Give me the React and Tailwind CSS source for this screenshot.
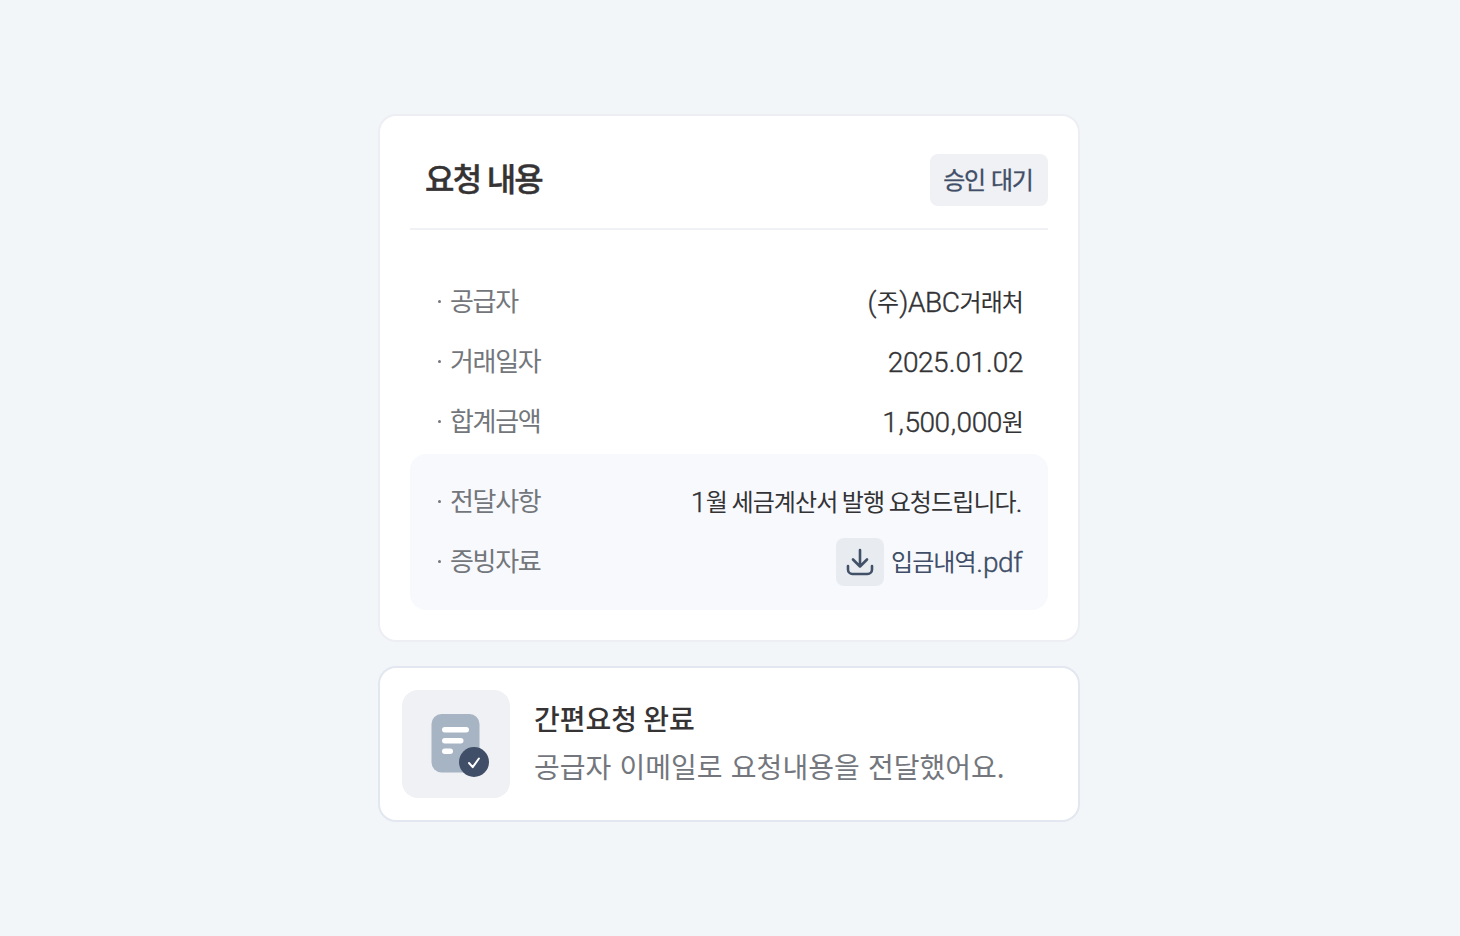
import React from "react";

const requestRows = [
    {
        label: "공급자",
        value: <><Latin className="mr-[1px]">(</Latin>주<Latin className="ml-[1px]">)ABC</Latin>거래처</>,
    },
    {
        label: "거래일자",
        value: <Latin>2025<Dot />01<Dot />02</Latin>,
    },
    {
        label: "합계금액",
        value: <><Latin>1<Comma />500<Comma />000</Latin>원</>,
    },
];

// Latin letters and digits are set in Roboto, a step larger than the Korean text
function Latin({ children, className = "" }) {
    return (
        <span className={`align-[-1px] font-['Roboto'] text-[28px] leading-none font-light tracking-[-0.45px] [-webkit-text-stroke:0.4px] ${className}`}>
            {children}
        </span>
    );
}

function Dot() {
    return <span className="px-[0.5px]">.</span>;
}

function Comma() {
    return <span className="px-[1px]">,</span>;
}

function Row({ label, children }) {
    return (
        <div className="flex h-[60px] items-center justify-between pl-7 pr-[25px]">
            <div className="flex items-center pb-[2px] text-[26px] leading-[36px] tracking-[-1.3px] text-[#73767b]">
                <span className="mr-[9px] h-[3px] w-[3px] rounded-full bg-[#73767b]" />
                <span className="-mt-[3px]">{label}</span>
            </div>
            <div className="flex items-center text-[24px] leading-[36px] tracking-[-0.9px] text-[#333336]">
                {children}
            </div>
        </div>
    );
}

function DownloadIcon() {
    return (
        <svg width="48" height="48" viewBox="0 0 48 48" fill="none" stroke="#425168" strokeWidth="2.6" strokeLinecap="round" strokeLinejoin="round">
            <path d="M24 12v16.5M17 21.5l7 7 7-7" />
            <path d="M12 28v3.5a4.5 4.5 0 0 0 4.5 4.5h15a4.5 4.5 0 0 0 4.5-4.5V28" />
        </svg>
    );
}

function DocumentIcon() {
    return (
        <svg width="108" height="108" viewBox="0 0 108 108" fill="none">
            <rect x="29.5" y="24" width="48" height="58.5" rx="10" fill="#a7b4c4" />
            <g fill="#fff">
                <rect x="40" y="37" width="27" height="5.5" rx="2.75" />
                <rect x="40" y="48" width="21.5" height="5.5" rx="2.75" />
                <rect x="40" y="58.5" width="11" height="5.5" rx="2.75" />
            </g>
            <circle cx="72" cy="72" r="15" fill="#404e67" />
            <path d="M67 73l3.7 4.2 6.2-8.7" stroke="#fff" strokeWidth="2" strokeLinecap="round" strokeLinejoin="round" />
        </svg>
    );
}

function App() {
    return (
        <div className="flex h-[936px] w-[1460px] flex-col items-start gap-6 bg-[#f2f6f9] pl-[378px] pt-[114px] font-['Noto_Sans_CJK_KR',sans-serif]">
            <section className="h-[528px] w-[702px] rounded-[18px] border-2 border-[#edeef3] bg-white px-[30px]">
                <div className="flex h-[114px] items-center justify-between border-b-2 border-[#f0f1f5] pl-[15px] pt-4">
                    <h1 className="pb-[6px] text-[32px] font-medium leading-[40px] tracking-[-1.8px] [word-spacing:1px] text-[#353334] [-webkit-text-stroke:0.4px]">요청 내용</h1>
                    <span className="flex h-[52px] w-[118px] items-center justify-center rounded-lg bg-[#eff1f5] pb-[2px] pr-[2px] text-[24px] leading-[36px] tracking-[-1.1px] [word-spacing:1.5px] text-[#404e67] [-webkit-text-stroke:0.3px]">
                        승인 대기
                    </span>
                </div>
                <div className="pt-[42px]">
                    {requestRows.map((row) => (
                        <Row key={row.label} label={row.label}>
                            <span className="-mt-[2px]">{row.value}</span>
                        </Row>
                    ))}
                </div>
                <div className="mt-[2px] rounded-2xl bg-[#f8f9fd] py-[18px]">
                    <Row label="전달사항">
                        <span className="-mt-[2px] mr-[1px]">
                            <Latin>1</Latin>월 세금계산서 발행 요청드립니다<Latin>.</Latin>
                        </span>
                    </Row>
                    <Row label="증빙자료">
                        <span className="mr-[7px] rounded-lg bg-[#e8ebf0]">
                            <DownloadIcon />
                        </span>
                        <span className="-mt-[2px] mr-[1px] text-[#404e67]">입금내역<Latin><Dot />pdf</Latin></span>
                    </Row>
                </div>
            </section>

            <section className="flex h-[156px] w-[702px] items-center gap-6 rounded-[18px] border-2 border-[#e2e7f0] bg-white px-[22px]">
                <div className="h-[108px] w-[108px] rounded-2xl bg-[#eff1f5]">
                    <DocumentIcon />
                </div>
                <div className="-mt-[4px]">
                    <h2 className="text-[28px] font-medium leading-[48px] text-[#353334]">간편요청 완료</h2>
                    <p className="text-[28px] leading-[48px] [word-spacing:2px] text-[#73777d]">공급자 이메일로 요청내용을 전달했어요.</p>
                </div>
            </section>
        </div>
    );
}

export default App;
